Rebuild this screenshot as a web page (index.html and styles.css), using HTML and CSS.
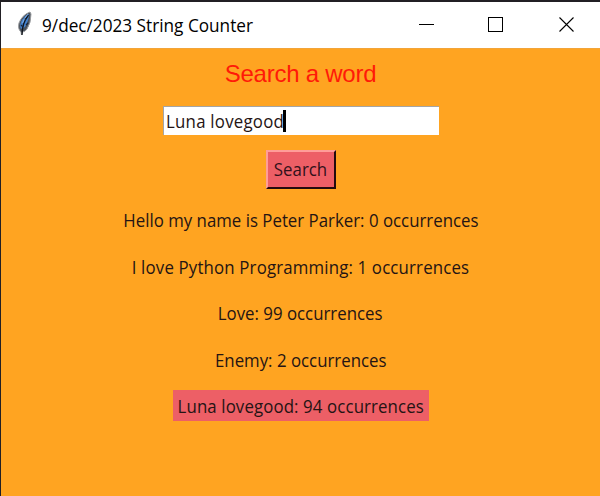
FILE: index.html
```
<!DOCTYPE html>
<html lang="en">
<head>
<meta charset="utf-8">
<title>9/dec/2023 String Counter</title>
<link rel="stylesheet" href="styles.css">
</head>
<body>
<div class="window">
  <header class="titlebar">
    <svg class="feather" width="16" height="26" viewBox="0 0 16 26">
      <path d="M5.500 24L5 21Q1.500 18 3 12Q6 4 14 1L15 3Q15 12 11 18Q9 21 6.500 21Z" fill="#4a525c" stroke="#999b9e" stroke-width="1"/>
      <path d="M5 18Q3 15 6 9Q9 4 13 3Q13 9 9 16Z" fill="#4382cf"/>
      <path d="M12.500 4Q6 12 6 24" fill="none" stroke="#10151c" stroke-width="1.300"/>
      <path d="M8 7L10 9M5 14L7 16M10 14L12 12" stroke="#17263b" stroke-width="1.200"/>
      <path d="M12 3Q8 7 6.500 12" fill="none" stroke="#8fb9e7" stroke-width=".8"/>
    </svg>
    <h1 class="title">9/dec/2023 String Counter</h1>
    <svg class="controls" width="155" height="17" viewBox="0 0 155 17" shape-rendering="crispEdges">
      <path d="M0 8.500H15" stroke="#000"/>
      <rect x="69.500" y="1.500" width="14" height="14" fill="none" stroke="#000"/>
      <path d="M140.500 1.500L154.500 15.500M154.500 1.500L140.500 15.500" stroke="#000" stroke-width="1.100" shape-rendering="auto"/>
    </svg>
  </header>
  <main class="content">
    <h2 class="heading">Search a word</h2>
    <div class="entry"><span class="entry-text">Luna lovegood</span><i class="caret"></i></div>
    <button class="search"><span>Search</span></button>
    <ul class="results">
      <li><span>Hello my name is Peter Parker: 0 occurrences</span></li>
      <li class="wide"><span>I love Python Programming: 1 occurrences</span></li>
      <li><span>Love: 99 occurrences</span></li>
      <li><span>Enemy: 2 occurrences</span></li>
      <li class="current"><span>Luna lovegood: 94 occurrences</span></li>
    </ul>
  </main>
</div>
</body>
</html>
```
FILE: styles.css
```
* { box-sizing: border-box; }
body { margin: 0; overflow: hidden; background: #211f24; }
.window {
  height: 496px;
  padding: 2px 0 0 1px;
  display: flex;
  flex-direction: column;
  font-family: "Open Sans", "Noto Sans", sans-serif;
}
.titlebar {
  height: 46px;
  display: flex;
  align-items: center;
  padding: 0 26px 0 16px;
  background: #fff;
}
.feather { margin: -2px 0 0 -1px; }
.title {
  margin: 0 auto 0 10px;
  font-size: 18px;
  font-weight: 400;
  line-height: 24px;
  white-space: nowrap;
  color: #000;
  transform: scaleX(.955);
  transform-origin: left;
}
.controls { display: block; margin-top: -1px; }
.content {
  flex: 1;
  display: flex;
  flex-direction: column;
  align-items: center;
  background: #ffa421;
  border-top: 1px solid #f2a43a;
}
.heading {
  margin: 11px 0 0;
  font: 400 24px/28px "Liberation Sans", sans-serif;
  letter-spacing: -0.25px;
  color: #ff1a08;
}
.entry {
  width: 276px;
  height: 29px;
  margin: 18px 0 0 1px;
  padding-left: 2px;
  display: flex;
  align-items: center;
  background: #fff;
  border: solid #a5a5a5;
  border-width: 1px 0 0 1px;
}
.entry-text, .search, .results {
  font-size: 18px;
  white-space: nowrap;
  color: #251414;
}
.entry-text {
  width: 117px;
  line-height: 24px;
  letter-spacing: 0.25px;
  transform: scaleX(.935);
  transform-origin: left;
}
.caret { width: 3px; height: 22px; background: #000; }
.search {
  width: 70px;
  height: 39px;
  margin-top: 15px;
  padding: 0 0 2px;
  font-family: inherit;
  line-height: 24px;
  color: #32111a;
  background: #ed5f66;
  border: 2px solid;
  border-color: #ff9d98 #240b0d #240b0d #ff9d98;
}
.search span, .results span {
  display: inline-block;
  transform: scaleX(.935);
}
.results {
  margin: 15px 0 0;
  padding: 0;
  list-style: none;
  display: flex;
  flex-direction: column;
  align-items: center;
  gap: 15.500px;
}
.results li { height: 31px; line-height: 33px; }
.results .wide { letter-spacing: 0.17px; }
.results .current {
  width: 256px;
  display: flex;
  justify-content: center;
  letter-spacing: 0.12px;
  background: #ed5f66;
}
```
